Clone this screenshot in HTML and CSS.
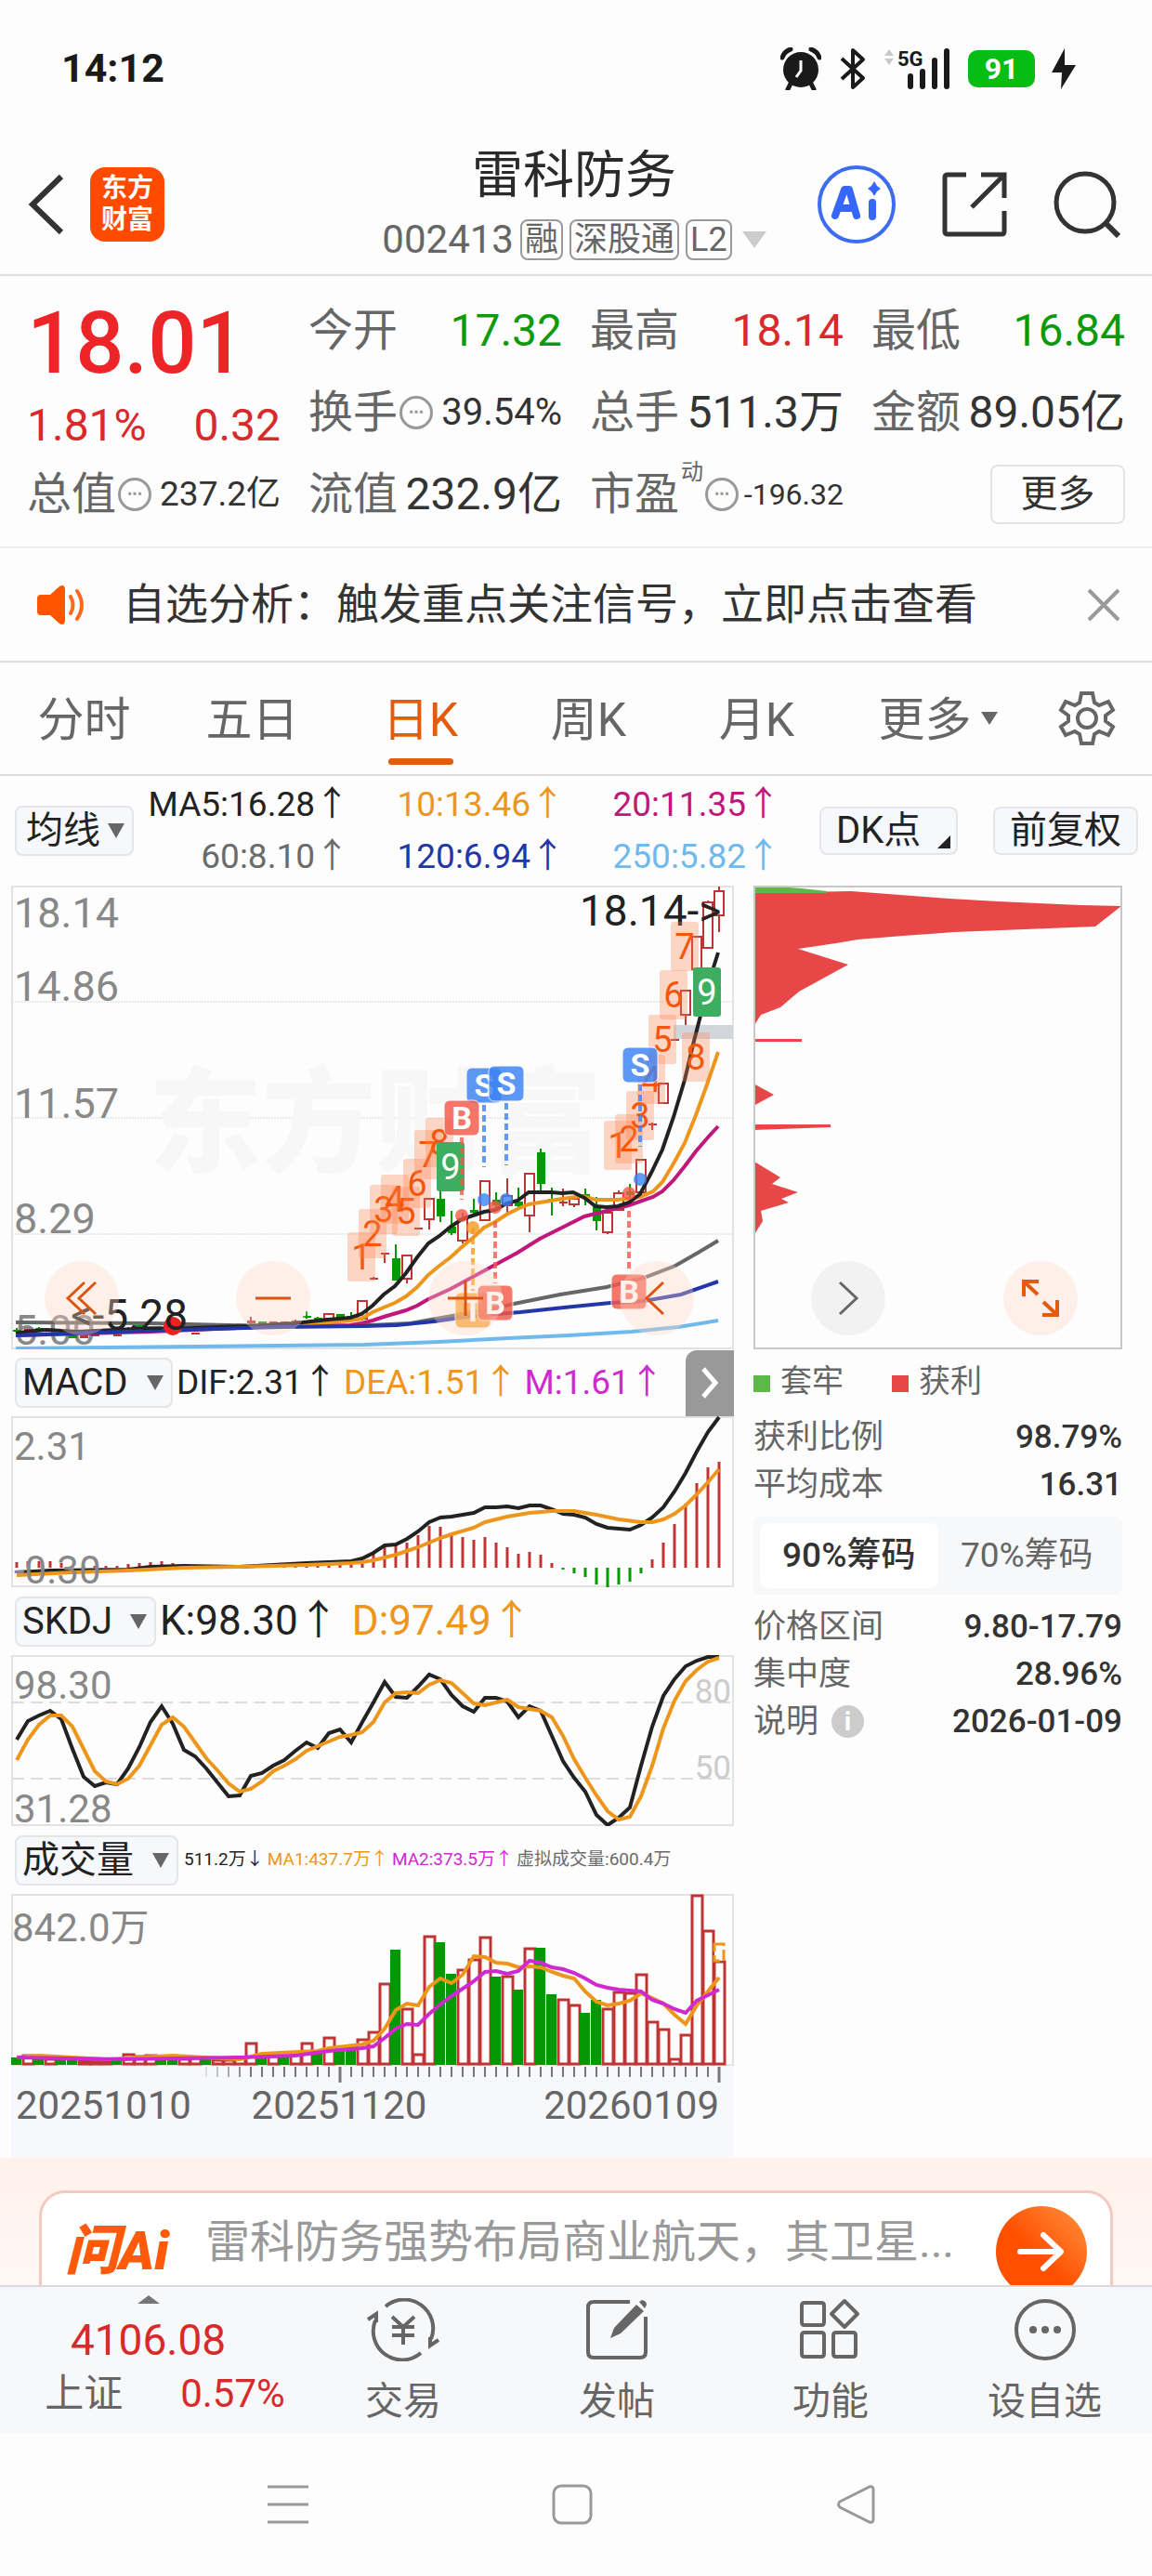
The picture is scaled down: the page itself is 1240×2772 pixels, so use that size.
FILE: index.html
```html
<!DOCTYPE html>
<html lang="zh-CN">
  <head>
    <meta charset="UTF-8" />
    <meta name="viewport" content="width=device-width, initial-scale=1.0" />
    <title>雷科防务 002413</title>
    <link rel="stylesheet" href="styles.css">
  </head>
  <body>
    <div class="status-bar">
      <span class="clock">14:12</span>
      <div class="status-icons">
        <svg width="44" height="46" viewBox="0 0 44 46">
          <circle cx="22" cy="24" r="19" fill="#1a1a1a" />
          <path d="M2 11A14 14 0 0 1 11 2M42 11A14 14 0 0 0 33 2M11 39l-3 6M33 39l3 6" stroke="#1a1a1a" stroke-width="5" fill="none" stroke-linecap="round" />
          <path d="M22 14v11l-5 7" stroke="#fff" stroke-width="3" fill="none" />
        </svg>
        <svg class="bluetooth" width="28" height="46" viewBox="0 0 28 46">
          <path d="M2 12L25 33L14 43V3L25 13L2 34" stroke="#1a1a1a" stroke-width="4" fill="none" stroke-linejoin="round" />
        </svg>
        <svg width="70" height="46" viewBox="0 0 70 46">
          <path d="M0 9l5-7 5 7zM0 12h10l-5 7z" fill="#c8c8c8" />
          <path d="M28 31v11M41 26v16M54 14v28M67 4v38" stroke="#1a1a1a" stroke-width="6" stroke-linecap="round" />
          <text x="14" y="20" class="net-label">5G</text>
        </svg>
        <div class="battery">91</div>
        <svg class="bolt" width="26" height="46" viewBox="0 0 26 46">
          <path d="M14 1L0 27h11l-1 18L26 19H14z" fill="#1a1a1a" />
        </svg>
      </div>
    </div>

    <header class="header">
      <div class="header-left">
        <button class="icon-btn" aria-label="返回">
          <svg width="40" height="66" viewBox="0 0 40 66">
            <path d="M36 3L5 33l31 30" stroke="#333" stroke-width="6" fill="none" />
          </svg>
        </button>
        <a href="#" class="logo">东方<br>财富</a>
      </div>
      <div class="stock-title">
        <h1>雷科防务</h1>
        <div class="stock-code">
          <span>002413</span>
          <span class="tag">融</span>
          <span class="tag">深股通</span>
          <span class="tag">L2</span>
          <i class="tri tri-light"></i>
        </div>
      </div>
      <div class="header-right">
        <button class="icon-btn" aria-label="AI">
          <svg width="84" height="84" viewBox="0 0 84 84">
            <circle cx="42" cy="42" r="40" stroke="#3c6df0" stroke-width="4" fill="#fff" />
            <path d="M19 54L29 26h5l8 28M25 46h12M59 40v15" stroke="#3766fa" stroke-width="8" fill="none" stroke-linejoin="round" stroke-linecap="round" />
            <path d="M61 17l3 5 4 3-4 3-3 5-3-5-4-3 4-3z" fill="#3766fa" />
          </svg>
        </button>
        <button class="icon-btn" aria-label="分享">
          <svg width="70" height="70" viewBox="0 0 70 70">
            <path d="M26 3H6q-3 0-3 3v58q0 3 3 3h58q3 0 3-3V42M42 3h25v25M66 4L32 38" stroke="#333" stroke-width="5" fill="none" />
          </svg>
        </button>
        <button class="icon-btn" aria-label="搜索">
          <svg width="72" height="72" viewBox="0 0 72 72">
            <circle cx="34" cy="34" r="31" stroke="#333" stroke-width="5" fill="none" />
            <path d="M56 56l14 14" stroke="#333" stroke-width="6" />
          </svg>
        </button>
      </div>
    </header>

    <section class="quote">
      <div class="price">
        <strong>18.01</strong>
        <div class="change"><span>1.81%</span><span>0.32</span></div>
      </div>
      <div class="cell"><span class="label">今开</span><span class="green">17.32</span></div>
      <div class="cell"><span class="label">最高</span><span class="red">18.14</span></div>
      <div class="cell"><span class="label">最低</span><span class="green">16.84</span></div>
      <div class="cell"><span class="label">换手<i class="dots">•••</i></span><span class="mid">39.54%</span></div>
      <div class="cell"><span class="label">总手</span><span>511.3万</span></div>
      <div class="cell"><span class="label">金额</span><span>89.05亿</span></div>
      <div class="cell"><span class="label">总值<i class="dots">•••</i></span><span class="small">237.2亿</span></div>
      <div class="cell"><span class="label">流值</span><span>232.9亿</span></div>
      <div class="cell"><span class="label">市盈<sup>动</sup><i class="dots">•••</i></span><span class="tiny">-196.32</span></div>
      <div class="cell cell-end"><button class="more-btn">更多</button></div>
    </section>

    <section class="notice">
      <svg width="54" height="44" viewBox="0 0 54 44">
        <path d="M4 11h10L24 2q6-3 6 4v32q0 7-6 4L14 33H4q-4 0-4-4V15q0-4 4-4z" fill="#ff5500" />
        <path d="M36 13q5 9 0 18M43 7q10 15 0 30" stroke="#ff6a1f" stroke-width="4" fill="none" stroke-linecap="round" />
      </svg>
      <p>自选分析：触发重点关注信号，立即点击查看</p>
      <button class="icon-btn" aria-label="关闭">
        <svg width="36" height="36" viewBox="0 0 36 36">
          <path d="M2 2l32 32M34 2L2 34" stroke="#999" stroke-width="4" />
        </svg>
      </button>
    </section>

    <nav class="tabs">
      <a href="#" class="tab">分时</a>
      <a href="#" class="tab">五日</a>
      <a href="#" class="tab active">日K</a>
      <a href="#" class="tab">周K</a>
      <a href="#" class="tab">月K</a>
      <button class="tab tab-more">更多<i class="tri"></i></button>
      <button class="gear" aria-label="设置">
        <svg width="62" height="62" viewBox="-31 -31 62 62">
          <path d="M-6-27H6L8-17 13-14 23-18 28-9 20-3V3L28 9 23 18 13 14 8 17 6 27H-6L-8 17-13 14-23 18-28 9-20 3V-3L-28-9-23-18-13-14-8-17z" stroke="#666" stroke-width="4" fill="none" />
          <circle r="10" stroke="#666" stroke-width="4" fill="none" />
        </svg>
      </button>
    </nav>

    <section class="ma-bar">
      <span class="picker picker-ma">
        <select aria-label="均线"><option>均线</option></select>
      </span>
      <div class="ma-values">
        <span class="c-black">MA5:16.28↑</span>
        <span class="c-orange">10:13.46↑</span>
        <span class="c-pink">20:11.35↑</span>
        <span class="c-gray">60:8.10↑</span>
        <span class="c-blue">120:6.94↑</span>
        <span class="c-sky">250:5.82↑</span>
      </div>
      <button class="chip-btn dk-btn">DK点</button>
      <button class="chip-btn">前复权</button>
    </section>

    <main class="board">
      <div class="charts">
        <div class="kline">
          <svg class="chart" viewBox="0 0 778 499">
            <rect x="1" y="1" width="776" height="497" class="frame" />
            <path d="M1 125h776M1 250h776M1 375h776" class="grid-line" />
            <text x="148" y="298" class="watermark">东方财富</text>
            <g class="axis-label">
              <text x="3" y="45">18.14</text>
              <text x="3" y="124">14.86</text>
              <text x="3" y="250">11.57</text>
              <text x="3" y="374">8.29</text>
              <text x="3" y="494">5.00</text>
            </g>
            <rect x="713" y="150" width="64" height="15" fill="#d2d6db" />
            <g id="candles"></g>
            <g id="ma-lines"></g>
            <circle cx="174" cy="474" r="10" fill="#ee2020" />
            <text x="190" y="478" class="mark" text-anchor="end">&lt;-5.28</text>
            <text x="612" y="43" class="mark">18.14-&gt;</text>
            <g id="td-marks"></g>
            <g id="bs-marks"></g>
          </svg>
          <div class="kline-tools">
            <button class="round-btn" aria-label="快退">
              <svg width="40" height="40" viewBox="0 0 40 40"><path d="M23 3L5 20l18 17M35 3L17 20l18 17" class="tool-line" /></svg>
            </button>
            <button class="round-btn" aria-label="缩小">
              <svg width="40" height="40" viewBox="0 0 40 40"><path d="M1 20h38" class="tool-line" /></svg>
            </button>
            <button class="round-btn" aria-label="放大">
              <svg width="40" height="40" viewBox="0 0 40 40"><path d="M1 20h38M20 1v38" class="tool-line" /></svg>
            </button>
            <button class="round-btn" aria-label="后退">
              <svg width="40" height="40" viewBox="0 0 40 40"><path d="M27 3L9 20l18 17" class="tool-line" /></svg>
            </button>
          </div>
        </div>

        <div class="indicator">
          <span class="picker picker-macd">
            <select aria-label="指标一"><option>MACD</option></select>
          </span>
          <div class="readout readout-macd">
            <span class="c-black">DIF:2.31↑</span>
            <span class="c-orange">DEA:1.51↑</span>
            <span class="c-purple">M:1.61↑</span>
          </div>
          <button class="next-btn" aria-label="下一页">
            <svg width="20" height="36" viewBox="0 0 20 36"><path d="M3 3l13 15L3 33" stroke="#fff" stroke-width="5" fill="none" /></svg>
          </button>
        </div>
        <svg class="chart" viewBox="0 0 778 184">
          <rect x="1" y="1" width="776" height="182" class="frame" />
          <g id="macd"></g>
          <g class="axis-label small-label">
            <text x="3" y="47">2.31</text>
            <text x="3" y="180">-0.30</text>
          </g>
        </svg>

        <div class="indicator">
          <span class="picker picker-skdj">
            <select aria-label="指标二"><option>SKDJ</option></select>
          </span>
          <div class="readout readout-skdj">
            <span class="c-black">K:98.30↑</span>
            <span class="c-orange">D:97.49↑</span>
          </div>
        </div>
        <svg class="chart" viewBox="0 0 778 184">
          <rect x="1" y="1" width="776" height="182" class="frame" />
          <path d="M1 51h776M1 133h776" class="dash-line" />
          <g class="axis-label small-label">
            <text x="3" y="47">98.30</text>
            <text x="3" y="180">31.28</text>
          </g>
          <g class="level-label">
            <text x="775" y="51">80</text>
            <text x="775" y="133">50</text>
          </g>
          <g id="skdj"></g>
        </svg>

        <div class="indicator">
          <span class="picker picker-vol">
            <select aria-label="指标三"><option>成交量</option></select>
          </span>
          <div class="readout readout-vol">
            <span class="c-black">511.2万↓</span>
            <span class="c-orange">MA1:437.7万↑</span>
            <span class="c-purple">MA2:373.5万↑</span>
            <span class="c-gray">虚拟成交量:600.4万</span>
          </div>
        </div>
        <svg class="chart" viewBox="0 0 778 185">
          <rect x="1" y="1" width="776" height="183" class="frame" />
          <g class="axis-label small-label">
            <text x="1" y="51">842.0万</text>
          </g>
          <g id="volume"></g>
        </svg>
        <svg class="chart date-axis" viewBox="0 0 778 99">
          <g id="ticks"></g>
          <g class="date-label">
            <text x="5" y="57">20251010</text>
            <text x="353" y="57" text-anchor="middle">20251120</text>
            <text x="762" y="57" text-anchor="end">20260109</text>
          </g>
        </svg>
      </div>

      <aside class="chips">
        <div class="chips-chart">
          <svg class="chart" viewBox="0 0 397 499">
            <path d="M0 8L105 6 158 10 211 14 263 17 307 19 352 21 396 22 368 44 292 47 216 50 161 54 112 58 89 62 48 68 102 85 49 114 29 131 8 139 0 152z
              M0 165h52v3H0zM0 213l22 12-22 12zM0 257h83v3L0 263zM0 285l1 12 28 17-9 7 28 9-18 7 8 4-30 9 2 11-10 16z" fill="#e84747" />
            <path d="M0 1h26l26 2 27 3v2H0z" fill="#5fb848" />
            <rect x="1" y="1" width="395" height="497" class="frame-dark" />
          </svg>
          <div class="chips-tools">
            <button class="round-btn round-gray" aria-label="收起">
              <svg width="24" height="40" viewBox="0 0 24 40"><path d="M3 3l18 17L3 37" stroke="#666" stroke-width="3" fill="none" /></svg>
            </button>
            <button class="round-btn" aria-label="全屏">
              <svg width="40" height="40" viewBox="0 0 40 40"><path d="M18 2H2v16M2 2l15 14M22 38h16V22M38 38L23 24" stroke="#e55a0b" stroke-width="4" fill="none" /></svg>
            </button>
          </div>
        </div>
        <div class="legend">
          <span class="legend-item legend-loss">套牢</span>
          <span class="legend-item legend-gain">获利</span>
        </div>
        <dl class="stats">
          <div><dt>获利比例</dt><dd>98.79%</dd></div>
          <div><dt>平均成本</dt><dd>16.31</dd></div>
        </dl>
        <div class="toggle">
          <button class="selected">90%筹码</button>
          <button>70%筹码</button>
        </div>
        <dl class="stats">
          <div><dt>价格区间</dt><dd>9.80-17.79</dd></div>
          <div><dt>集中度</dt><dd>28.96%</dd></div>
          <div><dt>说明<i class="info">i</i></dt><dd>2026-01-09</dd></div>
        </dl>
      </aside>
    </main>

    <section class="ask">
      <div class="ask-card">
        <span class="ask-logo">问Ai</span>
        <input type="text" aria-label="问AI" placeholder="雷科防务强势布局商业航天，其卫星..." />
        <button class="ask-btn" aria-label="发送">
          <svg width="52" height="44" viewBox="0 0 52 44"><path d="M3 22h43M28 4l19 18-19 18" stroke="#fff" stroke-width="6" fill="none" stroke-linecap="round" stroke-linejoin="round" /></svg>
        </button>
      </div>
    </section>

    <footer class="bottom-bar">
      <a href="#" class="index-box">
        <i class="tri tri-up"></i>
        <span class="index-value">4106.08</span>
        <span class="index-row"><span>上证</span><span class="red">0.57%</span></span>
      </a>
      <a href="#" class="action">
        <svg width="78" height="68" viewBox="-39 -34 78 68">
          <path d="M-19-25A31 31 0 0 1 30 10M19 25A31 31 0 0 1-30-10M-38-11l9-6v9M38 11l-9 6V8M-12-14L0-3 12-14M0-3v19M-12-3h24M-12 6h24" stroke="#666" stroke-width="4" fill="none" />
        </svg>
        交易
      </a>
      <a href="#" class="action">
        <svg width="68" height="68" viewBox="0 0 68 68">
          <path d="M48 4H9Q3 4 3 10v48q0 6 6 6h50q6 0 6-6V20" stroke="#666" stroke-width="4" fill="none" />
          <path d="M27 43l4-11 24-25 8 7-25 24zM58 4l3-2q5 1 5 5l-2 4z" fill="#666" />
        </svg>
        发帖
      </a>
      <a href="#" class="action">
        <svg width="68" height="68" viewBox="0 0 68 68">
          <path d="M6 5h18q3 0 3 3v18q0 3-3 3H6q-3 0-3-3V8q0-3 3-3zM6 37h18q3 0 3 3v20q0 3-3 3H6q-3 0-3-3V40q0-3 3-3zM40 37h18q3 0 3 3v20q0 3-3 3H40q-3 0-3-3V40q0-3 3-3zM49 3l14 14-14 14-14-14z" stroke="#666" stroke-width="4" fill="none" stroke-linejoin="round" />
        </svg>
        功能
      </a>
      <a href="#" class="action">
        <svg width="68" height="68" viewBox="0 0 68 68">
          <circle cx="34" cy="34" r="31" stroke="#666" stroke-width="4" fill="none" />
          <circle cx="21" cy="34" r="4" fill="#666" /><circle cx="34" cy="34" r="4" fill="#666" /><circle cx="47" cy="34" r="4" fill="#666" />
        </svg>
        设自选
      </a>
    </footer>

    <div class="system-nav">
      <svg width="44" height="44" viewBox="0 0 44 44"><path d="M0 3h44M0 22h44M0 41h44" class="sys-line" /></svg>
      <svg width="44" height="44" viewBox="0 0 44 44"><rect x="2" y="2" width="40" height="40" rx="8" class="sys-line" /></svg>
      <svg width="44" height="44" viewBox="0 0 44 44"><path d="M4 19L36 3q4-1 4 3v32q0 4-4 3L4 25q-3-3 0-6z" class="sys-line" /></svg>
    </div>

    <script src="charts.js"></script>
  </body>
</html>
```

FILE: styles.css
```css
* {
  box-sizing: border-box;
}
body {
  margin: 0;
  background-color: #fdfdfd;
  color: #333;
  font-family: Roboto, "Noto Sans CJK SC", sans-serif;
  line-height: 1.2;
}
h1,
p,
dl,
dd {
  margin: 0;
}
button,
select,
input {
  font-family: inherit;
  line-height: inherit;
  color: inherit;
}
button {
  border: none;
  background: none;
  padding: 0;
  cursor: pointer;
}
a {
  color: inherit;
  text-decoration: none;
}
i {
  font-style: normal;
}
svg {
  display: block;
}
.red {
  color: #d8292b;
}
.green {
  color: #0b9a0b;
}
.c-black {
  color: #222;
}
.c-orange {
  color: #ee961c;
}
.c-pink {
  color: #c0177c;
}
.c-gray {
  color: #6b6b6b;
}
.c-blue {
  color: #2336a8;
}
.c-sky {
  color: #6fb9ec;
}
.c-purple {
  color: #cf29cf;
}
.tri {
  display: inline-block;
  border: 9px solid transparent;
  border-top: 14px solid #666;
  border-bottom: none;
}
.tri-light {
  border-width: 18px 13px 0;
  border-top-color: #ccc;
}
.tri-up {
  border: 12px solid transparent;
  border-top: none;
  border-bottom: 9px solid #777;
}

/* status bar */
.status-bar {
  display: flex;
  justify-content: space-between;
  align-items: center;
  height: 148px;
  padding: 0 82px 0 66px;
}
.clock {
  font-size: 43px;
  font-weight: 700;
  color: #1a1a1a;
}
.status-icons {
  display: flex;
  align-items: center;
}
.bluetooth {
  margin: 0 20px;
}
.net-label {
  font-size: 22px;
  font-weight: 700;
  fill: #1a1a1a;
}
.battery {
  width: 72px;
  height: 40px;
  margin: 0 18px 0 20px;
  border-radius: 10px;
  background-color: #06bd14;
  color: #fff;
  font-size: 32px;
  font-weight: 700;
  line-height: 40px;
  text-align: center;
}

/* header */
.header {
  display: grid;
  grid-template-columns: 1fr auto 1fr;
  align-items: center;
  padding: 8px 34px 11px 30px;
  border-bottom: 2px solid #ddd;
}
.header-left,
.header-right {
  display: flex;
  align-items: center;
}
.header-left {
  gap: 27px;
}
.header-right {
  justify-content: flex-end;
  gap: 50px;
}
.logo {
  width: 80px;
  height: 80px;
  padding-top: 6px;
  border-radius: 16px;
  background-color: #ff4a00;
  color: #fff;
  font-size: 28px;
  font-weight: 700;
  line-height: 34px;
  text-align: center;
}
.stock-title {
  text-align: center;
}
.stock-title h1 {
  font-size: 55px;
  font-weight: 400;
  line-height: 64px;
  color: #2a2a2a;
}
.stock-code {
  display: flex;
  align-items: center;
  gap: 7px;
  margin-top: 12px;
  color: #666;
  font-size: 42px;
  line-height: 52px;
}
.tag {
  padding: 0 3px;
  border: 2px solid #999;
  border-radius: 8px;
  font-size: 36px;
  line-height: 40px;
}
.stock-code .tri {
  margin-left: 4px;
}

/* quote */
.quote {
  display: grid;
  grid-template-columns: repeat(4, 1fr);
  grid-auto-rows: 88px;
  column-gap: 30px;
  padding: 15px 29px 12px;
  border-bottom: 2px solid #eee;
  font-size: 48px;
}
.price {
  grid-row: span 2;
  color: #ee2528;
}
.price strong {
  display: block;
  font-size: 92px;
  font-weight: 500;
  line-height: 116px;
}
.change {
  display: flex;
  justify-content: space-between;
  color: #d8292b;
  line-height: 60px;
}
.cell {
  display: flex;
  justify-content: space-between;
  align-items: center;
  white-space: nowrap;
}
.cell-end {
  justify-content: flex-end;
}
.label {
  display: flex;
  align-items: center;
  color: #666;
}
.label sup {
  align-self: flex-start;
  margin: -10px 0 0 2px;
  font-size: 24px;
  line-height: 30px;
}
.dots {
  width: 36px;
  height: 36px;
  margin-left: 2px;
  border: 3px solid #999;
  border-radius: 50%;
  color: #999;
  font-size: 16px;
  line-height: 30px;
  text-align: center;
}
.mid {
  font-size: 40px;
}
.small {
  font-size: 37px;
}
.tiny {
  font-size: 32px;
}
.more-btn {
  width: 145px;
  height: 64px;
  border: 2px solid #e4e4e4;
  border-radius: 8px;
  font-size: 40px;
}

/* notice */
.notice {
  display: flex;
  align-items: center;
  height: 123px;
  padding: 0 34px 0 40px;
  border-bottom: 2px solid #ddd;
}
.notice p {
  flex: 1;
  margin-left: 38px;
  font-size: 46px;
  white-space: nowrap;
}

/* period tabs */
.tabs {
  display: flex;
  height: 122px;
  border-bottom: 2px solid #ddd;
}
.tab {
  position: relative;
  flex: 1;
  color: #666;
  font-size: 50px;
  line-height: 124px;
  text-align: center;
  white-space: nowrap;
}
.tab .tri {
  margin: 0 0 12px 10px;
}
.tab-more {
  padding-left: 14px;
}
.tab.active {
  color: #e55a0b;
}
.tab.active::after {
  content: "";
  position: absolute;
  left: 50%;
  bottom: 10px;
  width: 70px;
  height: 7px;
  margin-left: -35px;
  border-radius: 4px;
  background-color: #e55a0b;
}
.gear {
  display: flex;
  justify-content: center;
  align-items: center;
  width: 140px;
}

/* moving averages */
.ma-bar {
  display: flex;
  align-items: center;
  height: 118px;
  padding: 0 15px 0 16px;
}
.ma-values {
  display: grid;
  grid-template-columns: repeat(3, 232px);
  flex: 1;
  font-size: 37px;
  line-height: 56px;
  text-align: right;
  white-space: nowrap;
}
.picker {
  position: relative;
}
.picker::after {
  content: "";
  position: absolute;
  right: 10px;
  top: 19px;
  border: 9px solid transparent;
  border-top: 16px solid #666;
  border-bottom: none;
  pointer-events: none;
}
.picker select {
  width: 100%;
  height: 54px;
  padding: 0 0 0 10px;
  appearance: none;
  border: 2px solid #e4e6ea;
  border-radius: 8px;
  background-color: #f7f8fb;
  color: #222;
  font-size: 40px;
}
.picker-ma {
  width: 128px;
}
.picker-macd {
  width: 170px;
}
.picker-macd select,
.picker-skdj select,
.picker-vol select {
  padding-left: 6px;
}
.picker-skdj {
  width: 152px;
}
.picker-vol {
  width: 176px;
}
.chip-btn {
  position: relative;
  height: 52px;
  padding: 0 16px;
  border: 2px solid #e4e6ea;
  border-radius: 8px;
  background-color: #f7f8fb;
  color: #222;
  font-size: 40px;
  line-height: 46px;
}
.dk-btn {
  width: 149px;
  margin-right: 38px;
  text-align: left;
}
.dk-btn::after {
  content: "";
  position: absolute;
  right: 6px;
  bottom: 5px;
  border-left: 14px solid transparent;
  border-bottom: 14px solid #222;
}

/* charts */
.board {
  display: grid;
  grid-template-columns: 778fr 397fr;
  column-gap: 21px;
  padding: 0 32px 0 12px;
}
.chart {
  width: 100%;
  height: auto;
}
.kline,
.chips-chart {
  position: relative;
}
.frame {
  fill: none;
  stroke: #e2e2e2;
  stroke-width: 2;
}
.frame-dark {
  fill: none;
  stroke: #c8c8c8;
  stroke-width: 2;
}
.grid-line {
  stroke: #d8d8d8;
  stroke-dasharray: 2 1;
}
.dash-line {
  stroke: #ddd;
  stroke-width: 2;
  stroke-dasharray: 13 7;
}
.watermark {
  font-size: 122px;
  font-weight: 900;
  fill: #f7f7f7;
}
.axis-label {
  font-size: 45px;
  fill: #888;
}
.small-label {
  font-size: 42px;
}
.level-label {
  font-size: 35px;
  fill: #ccc;
  text-anchor: end;
}
.date-axis {
  background-color: #f7f8fb;
}
.date-label {
  font-size: 42px;
  fill: #666;
}
.mark {
  font-size: 46px;
  fill: #222;
}
.line {
  fill: none;
  stroke-width: 4;
}
.td-box {
  fill: #ff8250;
  fill-opacity: 0.32;
}
.td-nine {
  fill: #3dae60;
}
.td-text {
  font-size: 38px;
  fill: #f4570b;
  text-anchor: middle;
}
.td-text-nine {
  fill: #fff;
}
.bs-text {
  font-size: 34px;
  font-weight: 700;
  fill: #fff;
  text-anchor: middle;
}
.kline-tools,
.chips-tools {
  position: absolute;
  bottom: 15px;
  left: 36px;
  right: 43px;
  display: flex;
  justify-content: space-between;
}
.chips-tools {
  left: 62px;
  right: 48px;
}
.round-btn {
  display: flex;
  justify-content: center;
  align-items: center;
  width: 80px;
  height: 80px;
  border-radius: 50%;
  background-color: rgba(255, 215, 195, 0.35);
}
.round-gray {
  background-color: #f2f2f2;
}
.tool-line {
  fill: none;
  stroke: #dc5410;
  stroke-width: 3;
}
.indicator {
  display: flex;
  align-items: center;
  height: 73px;
  padding-left: 4px;
}
.kline + .indicator {
  height: 72px;
}
.readout {
  display: flex;
  flex: 1;
  white-space: nowrap;
}
.readout-macd {
  gap: 7px;
  margin-left: 4px;
  font-size: 37px;
}
.readout-skdj {
  gap: 14px;
  margin-left: 4px;
  font-size: 44px;
}
.readout-vol {
  gap: 4px;
  margin-left: 6px;
  font-size: 19px;
}
.next-btn {
  display: flex;
  justify-content: center;
  align-items: center;
  width: 52px;
  height: 71px;
  border-radius: 12px 0 0 0;
  background-color: #999;
}

/* chip distribution */
.legend {
  display: flex;
  gap: 52px;
  height: 69px;
  align-items: center;
  color: #666;
  font-size: 34px;
}
.legend-item::before {
  content: "";
  display: inline-block;
  width: 18px;
  height: 18px;
  margin-right: 11px;
  background-color: #5cb848;
}
.legend-gain::before {
  background-color: #e84747;
}
.stats {
  font-size: 35px;
  line-height: 51px;
}
.stats div {
  display: flex;
  justify-content: space-between;
}
.stats dt {
  display: flex;
  align-items: center;
  color: #666;
}
.stats dd {
  font-weight: 500;
}
.info {
  width: 35px;
  height: 35px;
  margin-left: 14px;
  border-radius: 50%;
  background-color: #ccc;
  color: #fff;
  font-size: 28px;
  font-weight: 700;
  line-height: 35px;
  text-align: center;
}
.toggle {
  display: grid;
  grid-template-columns: 1fr 1fr;
  margin: 9px 0;
  padding: 7px;
  border-radius: 8px;
  background-color: #f7f8fa;
}
.toggle button {
  height: 70px;
  border-radius: 8px;
  color: #666;
  font-size: 37px;
}
.toggle .selected {
  background-color: #fff;
  color: #333;
  font-weight: 500;
}

/* ask ai */
.ask {
  height: 137px;
  padding: 35px 42px 0;
  overflow: hidden;
  background: linear-gradient(#fff1ec, #fff8f3);
}
.ask-card {
  display: flex;
  align-items: center;
  height: 132px;
  padding: 0 25px;
  border: 3px solid #f4c9bf;
  border-radius: 28px;
  background-color: #fff;
}
.ask-logo {
  width: 116px;
  color: #ff5a0a;
  font-size: 58px;
  font-style: italic;
  font-weight: 900;
  white-space: nowrap;
}
.ask-card input {
  flex: 1;
  min-width: 0;
  height: 70px;
  margin: -22px 0 0 35px;
  padding: 0;
  border: none;
  background: none;
  font-size: 48px;
}
.ask-card input::placeholder {
  color: #999;
}
.ask-btn {
  display: flex;
  justify-content: center;
  align-items: center;
  width: 98px;
  height: 98px;
  border-radius: 50%;
  background: linear-gradient(45deg, #ff5000 45%, #ff9440);
}

/* bottom bar */
.bottom-bar {
  display: grid;
  grid-template-columns: 319fr 230fr 230fr 230fr 231fr;
  height: 159px;
  border-top: 2px solid #d8dade;
  background-color: #f7f8fa;
  color: #666;
}
.index-box {
  display: flex;
  flex-direction: column;
  align-items: center;
  padding-top: 9px;
}
.index-value {
  margin-top: 10px;
  color: #d8292b;
  font-size: 46px;
  line-height: 58px;
}
.index-row {
  display: flex;
  gap: 62px;
  margin-left: 36px;
  font-size: 42px;
  line-height: 58px;
}
.action {
  display: flex;
  flex-direction: column;
  align-items: center;
  padding-top: 12px;
  font-size: 41px;
  line-height: 60px;
}
.action svg {
  margin-bottom: 13px;
}
.system-nav {
  display: flex;
  justify-content: space-between;
  align-items: center;
  height: 154px;
  padding: 0 296px 0 288px;
}
.sys-line {
  fill: none;
  stroke: #999;
  stroke-width: 3;
}
```

FILE: charts.js
```javascript
const RED = "#bf3535";
const GREEN = "#009a00";
const STEP = 12;

// centre of the n-th trading day
const dayX = (n) => 6 + n * STEP;

function add(parent, name, attrs, text) {
  const el = document.createElementNS("http://www.w3.org/2000/svg", name);
  for (const key in attrs) el.setAttribute(key, attrs[key]);
  if (text) el.textContent = text;
  document.getElementById(parent).appendChild(el);
}

function line(parent, color, points) {
  add(parent, "polyline", { class: "line", stroke: color, points: points });
}

// "day,y" pairs to a polyline
function dayLine(parent, color, pairs) {
  const points = pairs.split(" ").map((p) => {
    const [n, y] = p.split(",");
    return dayX(Number(n)) + "," + y;
  });
  line(parent, color, points.join(" "));
}

// one value per day
function series(parent, color, values) {
  line(parent, color, values.map((y, n) => dayX(n) + "," + y).join(" "));
}

// day, up/down, body top, body bottom, high, low
const candles = [
  [0, 0, 478, 480, 476, 482], [1, 1, 477, 479, 477, 480], [2, 0, 476, 479, 475, 480],
  [5, 0, 484, 487, 484, 487], [6, 1, 484, 487, 484, 487], [7, 1, 483, 485, 483, 485],
  [9, 1, 483, 485, 483, 485], [10, 1, 476, 478, 475, 478], [11, 0, 473, 475, 473, 476],
  [16, 1, 481, 483, 481, 483], [21, 1, 468, 471, 464, 472], [22, 0, 469, 473, 469, 473],
  [23, 1, 469, 471, 469, 471], [24, 1, 469, 471, 469, 472], [25, 1, 468, 471, 467, 472],
  [26, 0, 463, 465, 458, 466], [27, 0, 465, 468, 464, 468], [28, 1, 461, 466, 460, 467],
  [29, 0, 461, 465, 461, 465], [30, 0, 463, 464, 459, 467], [31, 1, 447, 466, 447, 468],
  [32, 1, 422, 424, 421, 424], [33, 1, 395, 397, 395, 406], [34, 0, 401, 425, 386, 425],
  [35, 1, 398, 423, 398, 428], [36, 1, 368, 369, 368, 369], [37, 1, 337, 359, 337, 370],
  [38, 0, 337, 356, 329, 362], [39, 0, 367, 374, 350, 376], [40, 1, 359, 382, 352, 385],
  [41, 0, 349, 352, 337, 355], [42, 1, 318, 360, 318, 360], [43, 0, 338, 344, 330, 350],
  [44, 1, 334, 344, 315, 354], [45, 0, 340, 345, 325, 346], [46, 1, 310, 355, 310, 373],
  [47, 0, 287, 321, 283, 329], [48, 0, 337, 340, 325, 355], [49, 1, 340, 342, 326, 345],
  [50, 1, 337, 343, 335, 346], [51, 0, 332, 335, 326, 344], [52, 0, 345, 361, 335, 371],
  [53, 1, 352, 373, 352, 375], [54, 1, 331, 349, 328, 349], [55, 0, 329, 333, 321, 339],
  [56, 1, 295, 330, 295, 330], [57, 1, 256, 257, 255, 263], [58, 1, 213, 234, 213, 235],
  [59, 1, 165, 166, 165, 166], [60, 1, 113, 139, 113, 150], [61, 1, 55, 90, 55, 90],
  [62, 1, 18, 67, 16, 67], [63, 1, 6, 32, 1, 50],
];

candles.forEach(([n, up, top, bottom, high, low]) => {
  const x = dayX(n);
  const color = up ? RED : GREEN;
  if (up && bottom - top > 4) {
    add("candles", "path", {
      d: `M${x} ${high}V${top}M${x} ${bottom}V${low}M${x - 5} ${top}h10V${bottom}h-10z`,
      stroke: color, "stroke-width": 2, fill: "none",
    });
  } else {
    add("candles", "path", { d: `M${x} ${high}V${low}`, stroke: color, "stroke-width": 2 });
    add("candles", "rect", { x: x - 4, y: top, width: 9, height: Math.max(2, bottom - top), fill: color });
  }
});

line("ma-lines", "#666", "5,470 150,471 280,474 365,474 430,471 480,462 528,453 541,450 591,440 641,432 681,422 715,409 741,394 761,382");
line("ma-lines", "#6fb9ec", "5,498 200,496 380,494 460,491 535,487 600,484 668,480 718,475 761,468");
line("ma-lines", "#c0177c", "5,484 150,480 290,474 365,473 377,471 389,468 401,464 425,457 437,452 449,445 473,434 497,421 521,408 545,395 569,380 593,368 617,356 641,350 665,344 691,335 701,329 713,317 725,302 737,286 749,272 761,259");
line("ma-lines", "#ee961c", "290,473 341,470 365,468 377,466 389,459 401,454 413,449 425,442 437,432 449,419 461,409 473,400 485,389 497,379 509,368 521,362 533,354 545,348 557,343 569,341 593,337 615,334 629,338 653,338 677,335 691,329 701,319 713,299 725,277 737,247 749,214 761,179");
line("ma-lines", "#222", "5,482 16,480 38,478 71,480 135,477 195,476 255,474 305,471 341,467 365,465 377,461 389,452 401,440 413,431 425,417 437,400 449,385 461,377 473,367 485,359 497,355 509,351 521,349 533,342 545,339 557,330 581,330 593,331 605,330 617,336 629,345 641,346 653,345 665,341 677,332 689,309 701,284 713,249 725,209 735,167 742,140 751,104 761,72");
line("ma-lines", "#2336a8", "5,484 150,479 290,475 380,474 415,473 455,469 498,463 548,459 595,454 645,449 681,447 721,440 761,426");

// sequence counts, left/top of each box
const counts = [
  [1, 362, 373], [2, 374, 348], [3, 386, 322], [4, 398, 311], [5, 410, 324], [6, 422, 294],
  [7, 434, 263], [8, 446, 250], [9, 458, 276],
  [1, 638, 253], [2, 650, 246], [3, 662, 221], [4, 674, 182], [5, 686, 139], [6, 698, 91],
  [7, 710, 39], [8, 722, 158], [9, 734, 88],
];
counts.forEach(([n, x, y]) => {
  const nine = n === 9;
  add("td-marks", "rect", { x, y, width: 30, height: 53, rx: 3, class: nine ? "td-nine" : "td-box" });
  add("td-marks", "text", { x: x + 15, y: y + 40, class: nine ? "td-text td-text-nine" : "td-text" }, String(n));
});

// label, colour, badge left/top, dash x/from/to, dot y
const signals = [
  ["S", "#3c82f6", 490, 196, 509, 236, 303, 338],
  ["S", "#3c82f6", 514, 194, 533, 234, 301, 338],
  ["B", "#f55a4a", 466, 231, 485, 271, 338, 355],
  ["S", "#3c82f6", 658, 174, 677, 214, 281, 316],
  ["T", "#f59a23", 478, 438, 497, 368, 436, 368],
  ["B", "#f55a4a", 502, 430, 521, 361, 428, 346],
  ["B", "#f55a4a", 646, 418, 665, 350, 416, 331],
];
signals.forEach(([label, color, x, y, dx, from, to, dot]) => {
  add("bs-marks", "path", { d: `M${dx} ${from}V${to}`, stroke: color, "stroke-width": 4, "stroke-dasharray": "7 4", opacity: 0.8 });
  add("bs-marks", "circle", { cx: dx, cy: dot, r: 7, fill: color, opacity: 0.8 });
  add("bs-marks", "rect", { x, y, width: 38, height: 38, rx: 6, fill: color, stroke: "#fff", opacity: 0.82 });
  add("bs-marks", "text", { x: x + 19, y: y + 31, class: "bs-text" }, label);
});

// MACD
const macdBars = [
  157, 156, 156, 156, 158, 161, 161, 161, 161, 161, 159, 158, 157, 156, 158, 159,
  161, 161, 161, 161, 161, 161, 161, 161, 161, 161, 161, 161, 161, 160, 158, 156,
  147, 139, 139, 136, 128, 118, 119, 127, 130, 133, 130, 136, 141, 148, 146, 149,
  158, 165, 169, 173, 181, 184, 181, 178, 169, 154, 136, 116, 94, 72, 55, 49,
];
macdBars.forEach((y, n) => {
  add("macd", "path", { d: `M${dayX(n)} 163V${y}`, stroke: y < 163 ? RED : GREEN, "stroke-width": 3 });
});
dayLine("macd", "#222", "0,168 3,166 10,165 12,162 15,161 20,162 26,158 30,156 31,153 32,147 33,139 34,138 35,132 36,124 37,114 38,109 39,108 40,106 41,104 42,98 43,98 44,97 45,99 46,96 47,96 48,100 49,105 50,106 51,109 52,116 53,120 54,121 55,122 56,117 57,109 58,98 59,81 60,61 61,38 62,17 63,1");
dayLine("macd", "#ee961c", "0,171 5,168 10,166 15,163 20,162 26,160 30,158 31,157 32,155 33,152 34,149 35,145 36,141 37,136 38,131 39,127 41,120 42,114 44,108 46,104 48,102 50,102 52,106 54,111 56,114 57,114 58,111 59,105 60,96 61,84 62,71 63,57");

// SKDJ
series("skdj", "#222", [
  91, 71, 65, 60, 69, 101, 131, 141, 137, 139, 122, 99, 72, 55, 74, 102,
  109, 122, 137, 152, 151, 130, 127, 119, 113, 103, 94, 100, 84, 80, 94, 72,
  51, 29, 45, 46, 34, 21, 26, 43, 55, 61, 46, 46, 50, 67, 55, 60,
  87, 114, 132, 147, 172, 183, 175, 164, 119, 77, 44, 26, 12, 6, 2, 2,
]);
series("skdj", "#ee961c", [
  113, 91, 75, 65, 65, 77, 101, 125, 136, 139, 133, 119, 97, 75, 67, 77,
  94, 111, 124, 138, 147, 144, 136, 125, 119, 112, 103, 98, 93, 88, 86, 83,
  72, 51, 41, 40, 41, 32, 27, 30, 41, 52, 54, 51, 48, 56, 58, 60,
  67, 87, 112, 132, 151, 168, 177, 174, 152, 119, 79, 49, 28, 16, 7, 3,
]);

// volume, bar tops; down days are filled green
const volume = [
  176, 173, 177, 177, 178, 178, 179, 179, 179, 177, 172, 174, 173, 178, 178, 177,
  176, 178, 178, 178, 175, 160, 175, 174, 174, 172, 160, 170, 154, 165, 162, 156,
  148, 96, 60, 123, 172, 45, 52, 86, 81, 70, 46, 89, 88, 103, 58, 58,
  108, 113, 119, 128, 114, 123, 105, 106, 86, 137, 145, 177, 151, 1, 39, 72,
];
const downDays = [0, 2, 4, 5, 9, 13, 14, 17, 22, 24, 27, 29, 30, 34, 38, 39, 43, 45, 47, 48, 51, 52];
volume.forEach((y, n) => {
  const x = dayX(n);
  if (downDays.includes(n)) {
    add("volume", "rect", { x: x - 6, y, width: 11, height: 184 - y, fill: GREEN });
  } else {
    add("volume", "rect", { x: x - 5, y: y + 1, width: 11, height: 182 - y, fill: "#fff", stroke: RED, "stroke-width": 3 });
  }
});
add("volume", "rect", { x: 757, y: 54, width: 10, height: 18, fill: "#fff", stroke: "#ee961c", "stroke-width": 3, "stroke-dasharray": "12 4" });
dayLine("volume", "#ee961c", "0,176 2,174 8,178 14,174 20,178 22,172 27,169 28,166 31,162 32,158 33,145 34,125 35,118 36,120 37,100 38,91 39,96 40,87 41,67 42,68 43,74 44,75 45,79 46,78 47,79 48,84 49,88 50,91 51,105 52,116 53,120 54,118 55,115 56,107 57,112 58,118 59,130 60,140 61,120 62,105 63,90");
dayLine("volume", "#cf29cf", "0,176 9,178 20,176 25,174 28,169 31,166 32,164 33,155 34,145 35,140 36,141 37,129 38,119 39,110 40,102 41,94 42,84 43,83 44,86 45,83 46,72 47,74 48,79 49,81 50,85 51,91 52,98 53,101 54,103 55,104 56,105 57,114 58,118 59,124 60,128 61,115 62,109 63,103");

for (let n = 17; n < 64; n++) {
  const long = n === 29 || n === 63;
  add("ticks", "path", {
    d: `M${dayX(n)} 1V${long ? 18 : 12}`,
    stroke: "#777",
    "stroke-width": long ? 3 : 2,
    opacity: Math.min(1, (n - 16) / 5),
  });
}
```
